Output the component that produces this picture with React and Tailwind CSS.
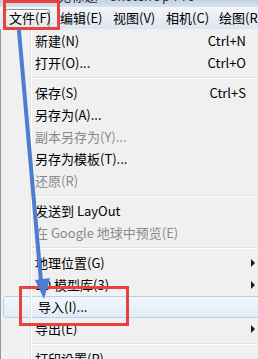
import React from "react";

const menuBar = ["文件(F)", "编辑(E)", "视图(V)", "相机(C)", "绘图(R)"];

const items = [
  { label: "新建(N)", key: "Ctrl+N" },
  { label: "打开(O)...", key: "Ctrl+O" },
  { sep: true },
  { label: "保存(S)", key: "Ctrl+S" },
  { label: "另存为(A)..." },
  { label: "副本另存为(Y)...", disabled: true },
  { label: "另存为模板(T)..." },
  { label: "还原(R)", disabled: true },
  { sep: true },
  { label: "发送到 LayOut" },
  { label: "在 Google 地球中预览(E)", disabled: true },
  { sep: true },
  { label: "地理位置(G)", sub: true },
  { label: "3D 模型库(3)", sub: true },
  { label: "导入(I)...", active: true },
  { label: "导出(E)", sub: true },
  { sep: true },
  { label: "打印设置(P)" },
];

const MenuItem = ({ item }) => {
  if (item.sep) {
    return (
      <div className="h-2 flex flex-col justify-center pl-[31px]">
        <div className="h-px bg-[#e0e0e0]" />
        <div className="h-px bg-white" />
      </div>
    );
  }
  return (
    <div
      className={
        "h-[22px] flex items-center pl-[34px] pr-[12px] " +
        (item.active
          ? "ml-[2px] -mr-2 rounded-[3px] border border-[#aad2f6] bg-gradient-to-b from-[#f4f7fc] to-[#e3ebf6] pl-[31px]"
          : "")
      }
    >
      <span className={"flex-1 " + (item.disabled ? "text-[#8a8a8a]" : "text-black")}>
        {item.label}
      </span>
      {item.key && <span className="text-black">{item.key}</span>}
      {item.sub && (
        <span className="w-0 h-0 mr-[-9px] border-y-[4px] border-y-transparent border-l-[4px] border-l-[#1a1a1a]" />
      )}
    </div>
  );
};

const App = () => {
  return (
    <div className="relative w-[258px] h-[359px] overflow-hidden bg-[#f0f0f0] font-['Noto_Sans_CJK_SC',sans-serif] text-[13px] leading-[22px]">
      {/* window caption, mostly cut off */}
      <div className="h-[7px] overflow-hidden bg-gradient-to-b from-[#c4d2e0] to-[#d8e2ee]">
        <div className="-mt-[15px] pl-[58px] text-[#333] tracking-wide whitespace-nowrap">无标题 - SketchUp Pro</div>
      </div>

      {/* menu bar */}
      <div className="h-[22px] flex items-center bg-gradient-to-b from-[#f3f6fa] to-[#dde6f1] pl-[5px] whitespace-nowrap">
        {menuBar.map((m, i) => (
          <div
            key={m}
            className={
              "h-[19px] flex items-center shrink-0 text-black " +
              (i === 0
                ? "w-[45px] pl-[3px] mr-[10px] rounded-[3px] border border-[#8e9398] bg-gradient-to-b from-[#f6f7f8] to-[#e4e7eb] shadow-[inset_0_1px_0_#fff]"
                : "w-[53px]")
            }
          >
            {m}
          </div>
        ))}
      </div>

      {/* dropdown */}
      <div className="relative border-l border-[#979797] pt-px">
        <div className="absolute top-0 bottom-0 left-[29px] w-px bg-[#e2e3e3]" />
        <div className="absolute top-0 bottom-0 left-[30px] w-px bg-white" />
        {items.map((it, i) => (
          <MenuItem key={i} item={it} />
        ))}
      </div>

      {/* annotations */}
      <div className="absolute left-[3px] top-0 w-[57px] h-[30px] border-[3px] border-[#e5433d]" />
      <div className="absolute left-[19px] top-[286px] w-[110px] h-[40px] border-[3px] border-[#e5433d]" />
      <svg className="absolute left-0 top-0" width="258" height="359" viewBox="0 0 258 359">
        <line x1="19" y1="31" x2="41" y2="282" stroke="#4f7bd0" strokeWidth="4" strokeLinecap="round" />
        <polygon points="35,280 50,278 44,299" fill="#4f7bd0" />
      </svg>
    </div>
  );
};

export default App;
